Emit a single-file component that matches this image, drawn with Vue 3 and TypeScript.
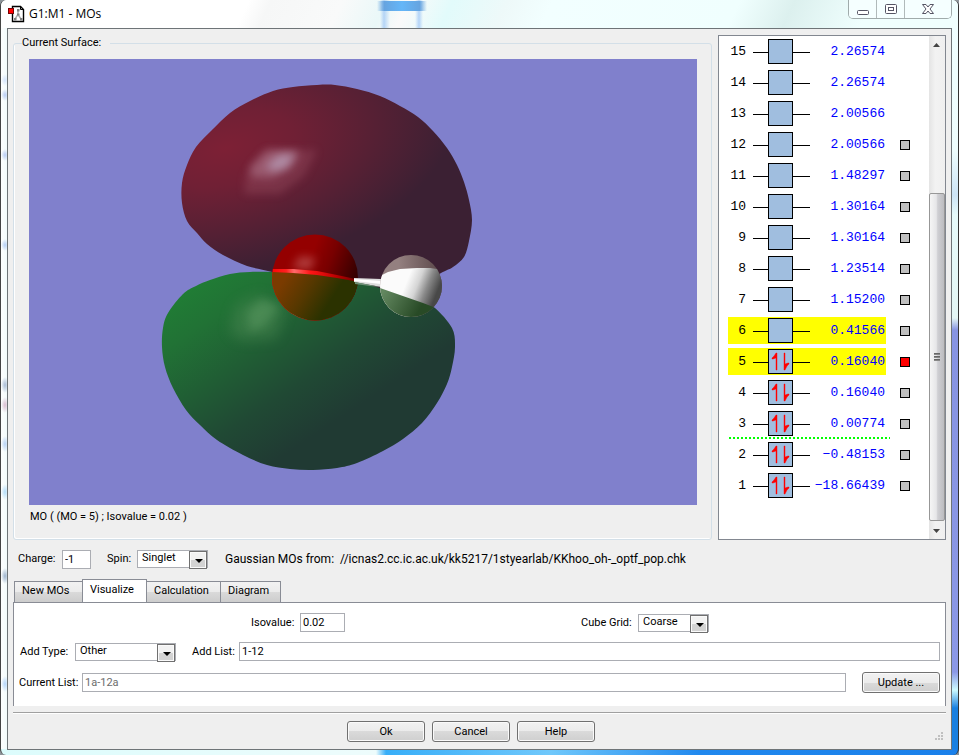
<script setup lang="ts">
import { ref } from 'vue'

interface Orbital {
  id: number
  energy: string
  occupied: boolean
  frontier: boolean
  cube: 'none' | 'available' | 'shown'
}

type Point = [number, number]

const orbitals = ref<Orbital[]>([
  { id: 15, energy: '2.26574', occupied: false, frontier: false, cube: 'none' },
  { id: 14, energy: '2.26574', occupied: false, frontier: false, cube: 'none' },
  { id: 13, energy: '2.00566', occupied: false, frontier: false, cube: 'none' },
  { id: 12, energy: '2.00566', occupied: false, frontier: false, cube: 'available' },
  { id: 11, energy: '1.48297', occupied: false, frontier: false, cube: 'available' },
  { id: 10, energy: '1.30164', occupied: false, frontier: false, cube: 'available' },
  { id: 9, energy: '1.30164', occupied: false, frontier: false, cube: 'available' },
  { id: 8, energy: '1.23514', occupied: false, frontier: false, cube: 'available' },
  { id: 7, energy: '1.15200', occupied: false, frontier: false, cube: 'available' },
  { id: 6, energy: '0.41566', occupied: false, frontier: true, cube: 'available' },
  { id: 5, energy: '0.16040', occupied: true, frontier: true, cube: 'shown' },
  { id: 4, energy: '0.16040', occupied: true, frontier: false, cube: 'available' },
  { id: 3, energy: '0.00774', occupied: true, frontier: false, cube: 'available' },
  { id: 2, energy: '−0.48153', occupied: true, frontier: false, cube: 'available' },
  { id: 1, energy: '−18.66439', occupied: true, frontier: false, cube: 'available' },
])

// Closed Catmull-Rom curve through the contour points of a lobe.
function contour(points: Point[]): string {
  const n = points.length
  const at = (i: number): Point => points[(i + n) % n]
  let d = `M${points[0][0]} ${points[0][1]}`
  for (let i = 0; i < n; i++) {
    const [p0, p1, p2, p3] = [at(i - 1), at(i), at(i + 1), at(i + 2)]
    d += `C${p1[0] + (p2[0] - p0[0]) / 6} ${p1[1] + (p2[1] - p0[1]) / 6}`
    d += ` ${p2[0] - (p3[0] - p1[0]) / 6} ${p2[1] - (p3[1] - p1[1]) / 6} ${p2[0]} ${p2[1]}`
  }
  return d + 'Z'
}

const redLobe = contour([
  [182, 203], [182, 183], [187, 165], [196, 147], [212, 130], [230, 113], [250, 101], [273, 91],
  [293, 87], [317, 85], [335, 85], [357, 89], [380, 96], [400, 106], [418, 117], [433, 131],
  [447, 148], [457, 165], [464, 182], [469, 200], [472, 220], [469, 241], [464, 257], [453, 267],
  [441, 273], [420, 285], [365, 288], [310, 285], [272, 272], [247, 266], [223, 255], [207, 244],
  [197, 233], [187, 221],
])

const greenLobe = contour([
  [162, 347], [163, 328], [168, 313], [183, 294], [196, 286], [210, 280], [230, 274], [250, 272],
  [273, 272], [293, 273], [317, 275], [337, 278], [357, 282], [380, 288], [400, 295], [423, 303],
  [435, 308], [452, 328], [455, 347], [452, 367], [447, 384], [437, 403], [422, 423], [403, 439],
  [383, 451], [357, 463], [337, 468], [313, 470], [290, 469], [267, 465], [243, 455], [217, 440],
  [200, 425], [186, 410], [173, 388], [165, 367],
])

const tabs = ['New MOs', 'Visualize', 'Calculation', 'Diagram']
const activeTab = ref('Visualize')
const charge = ref('-1')
const spin = ref('Singlet')
const isovalue = ref('0.02')
const cubeGrid = ref('Coarse')
const addType = ref('Other')
const addList = ref('1-12')
const currentList = ref('1a-12a')
</script>

<template>
  <div class="window">
    <header class="titlebar">
      <svg class="app-icon" width="17" height="18" viewBox="0 0 17 18" aria-hidden="true">
        <path d="M4.500 1.500H12.500L15.500 4.500V16.500H4.500Z" fill="#fff" stroke="#000" stroke-width="1.400" />
        <path d="M12.500 1.500V4.500H15.500" fill="none" stroke="#000" />
        <path d="M10 5V9.500L7 14M10 9.500L13 14" fill="none" stroke="#aaa" stroke-width="1.400" />
        <path d="M9 4h2.500v2.500h-2.500zM6 13h2.500v2.500h-2.500zM12 13h2.500v2.500h-2.500zM9 8.500h2.500v2h-2.500z" fill="#808080" />
        <rect x="0.500" y="3.500" width="5" height="5" fill="#f00" stroke="#700" />
      </svg>
      <h1>G1:M1 - MOs</h1>
      <div class="caption-buttons">
        <button type="button" aria-label="Minimize">
          <svg width="14" height="12" viewBox="0 0 14 12"><rect x="1.500" y="7.500" width="11" height="4" rx="1" fill="#fff" stroke="#555564" /></svg>
        </button>
        <button type="button" aria-label="Restore">
          <svg width="14" height="12" viewBox="0 0 14 12"><rect x="1.500" y="1.500" width="11" height="9" rx="1" fill="#fff" stroke="#555564" /><rect x="4.500" y="4.500" width="5" height="3" fill="#fff" stroke="#555564" /></svg>
        </button>
        <button type="button" class="close" aria-label="Close">
          <svg width="14" height="12" viewBox="0 0 14 12"><path d="M1.500 1.500H5L7 4L9 1.500H12.500L9 6L12.500 10.500H9L7 8L5 10.500H1.500L5 6Z" fill="#fff" stroke="#555564" /></svg>
        </button>
      </div>
    </header>

    <main class="client">
      <section class="upper">
        <fieldset class="surface">
          <legend>Current Surface:</legend>
          <svg class="scene" viewBox="29 59 668 446" preserveAspectRatio="xMidYMid meet" role="img" aria-label="Molecular orbital surface">
            <defs>
              <radialGradient id="redShade" gradientUnits="userSpaceOnUse" cx="0" cy="0" r="1" gradientTransform="translate(225 148) rotate(-12) scale(235 125)">
                <stop offset="0" stop-color="#7d2035" />
                <stop offset="0.3" stop-color="#702035" />
                <stop offset="0.65" stop-color="#562034" />
                <stop offset="1" stop-color="#3b2033" />
              </radialGradient>
              <linearGradient id="greenShade" gradientUnits="userSpaceOnUse" x1="185" y1="275" x2="298" y2="446">
                <stop offset="0" stop-color="#208035" />
                <stop offset="0.25" stop-color="#217235" />
                <stop offset="0.5" stop-color="#205e34" />
                <stop offset="0.75" stop-color="#204934" />
                <stop offset="1" stop-color="#203a33" />
              </linearGradient>
              <linearGradient id="oxygenTop" gradientUnits="userSpaceOnUse" x1="310" y1="258" x2="356" y2="276">
                <stop offset="0" stop-color="#940000" />
                <stop offset="0.4" stop-color="#780000" />
                <stop offset="1" stop-color="#350000" />
              </linearGradient>
              <linearGradient id="oxygenLow" gradientUnits="userSpaceOnUse" x1="285" y1="278" x2="328" y2="305">
                <stop offset="0" stop-color="#7a3b00" />
                <stop offset="0.5" stop-color="#563800" />
                <stop offset="1" stop-color="#2b3200" />
              </linearGradient>
              <linearGradient id="oxygenBand" x1="0" x2="1">
                <stop offset="0" stop-color="#f00" />
                <stop offset="0.18" stop-color="#ff2020" />
                <stop offset="0.27" stop-color="#ff6a6a" />
                <stop offset="0.45" stop-color="#ff1515" />
                <stop offset="0.75" stop-color="#b80000" />
                <stop offset="1" stop-color="#600" />
              </linearGradient>
              <linearGradient id="hydrogenTop" x1="0" x2="1">
                <stop offset="0.3" stop-color="#948080" />
                <stop offset="1" stop-color="#584547" />
              </linearGradient>
              <linearGradient id="hydrogenMid" gradientUnits="userSpaceOnUse" x1="408" y1="278" x2="438" y2="290">
                <stop offset="0" stop-color="#fbfbfb" />
                <stop offset="0.35" stop-color="#d4d4d4" />
                <stop offset="0.65" stop-color="#8a8a8a" />
                <stop offset="1" stop-color="#484848" />
              </linearGradient>
              <linearGradient id="hydrogenLow" gradientUnits="userSpaceOnUse" x1="385" y1="289" x2="420" y2="309">
                <stop offset="0" stop-color="#62875f" />
                <stop offset="1" stop-color="#284a26" />
              </linearGradient>
              <clipPath id="oxygenClip"><circle cx="315" cy="277.500" r="43" /></clipPath>
              <clipPath id="hydrogenClip"><circle cx="411" cy="286" r="31" /></clipPath>
              <filter id="soft" x="-50%" y="-50%" width="200%" height="200%"><feGaussianBlur stdDeviation="4" /></filter>
              <filter id="wide" x="-50%" y="-50%" width="200%" height="200%"><feGaussianBlur stdDeviation="7" /></filter>
            </defs>
            <rect x="29" y="59" width="668" height="446" fill="#8080cc" />
            <path :d="redLobe" fill="url(#redShade)" />
            <path d="M246 174L264 150L317 150L304 176L280 194L244 194Z" fill="#975064" opacity="0.400" filter="url(#soft)" />
            <path d="M250 167L268 150L300 151L291 167L272 178L252 177Z" fill="#b27f94" opacity="0.500" filter="url(#soft)" />
            <path d="M265 167L279 155L295 154L287 167L275 171Z" fill="#b9a2bd" opacity="0.700" filter="url(#soft)" />
            <path :d="greenLobe" fill="url(#greenShade)" />
            <path d="M236 306L258 295L286 306L276 338L243 340L230 332Z" fill="#58925c" opacity="0.400" filter="url(#wide)" />
            <path d="M248 312L262 299L278 307L264 326L250 331Z" fill="#5c9a62" opacity="0.500" filter="url(#soft)" />
            <g clip-path="url(#oxygenClip)">
              <rect x="270" y="233" width="90" height="90" fill="url(#oxygenTop)" />
              <path d="M292 268L300 256L316 258L310 270Z" fill="#c87474" opacity="0.500" filter="url(#soft)" />
              <path d="M270 269L293 269L317 271L337 275L360 280V323H270Z" fill="url(#oxygenBand)" />
              <path d="M270 272L293 273L317 275L337 278L360 282V323H270Z" fill="url(#oxygenLow)" />
            </g>
            <path d="M354 278L381 279V287L354 282Z" fill="#ddd" />
            <path d="M354 279L381 281V284L354 281Z" fill="#fff" />
            <path d="M355 282L381 287L370 286L355 284Z" fill="#6f9077" />
            <g clip-path="url(#hydrogenClip)">
              <rect x="380" y="255" width="62" height="62" fill="url(#hydrogenTop)" />
              <path d="M380 276L388 272L400 269L417 268L430 268L443 270V318H380Z" fill="url(#hydrogenMid)" />
              <path d="M380 288L400 295L423 303L436 308V318H380Z" fill="url(#hydrogenLow)" />
            </g>
          </svg>
          <p class="surface-caption">MO ( (MO = 5) ; Isovalue = 0.02 )</p>
        </fieldset>

        <div class="orbital-list">
          <table aria-label="Orbital energies">
            <tbody>
              <tr v-for="mo in orbitals" :key="mo.id" :class="{ frontier: mo.frontier, core: mo.id === 3 }">
                <th scope="row">{{ mo.id }}</th>
                <td class="level">
                  <svg width="57" height="25" viewBox="0 0 57 25">
                    <path d="M0 13.500H15M40 13.500H57" stroke="#000" />
                    <rect x="15.500" y="0.500" width="24" height="24" fill="#a0bedf" stroke="#000" />
                    <path v-if="mo.occupied" d="M23 4H24V21H23V9L20 10H19V9L21 7ZM31 4H32V15L35 14H36V15L34 17L32 21H31Z" fill="#f00" stroke="#f00" stroke-width="0.400" />
                  </svg>
                </td>
                <td class="energy">{{ mo.energy }}</td>
                <td class="cube">
                  <input v-if="mo.cube !== 'none'" type="checkbox" :checked="mo.cube === 'shown'" :aria-label="`Orbital ${mo.id}`" />
                </td>
              </tr>
            </tbody>
          </table>
          <div class="scrollbar" aria-hidden="true">
            <svg class="arrow" width="15" height="16" viewBox="0 0 15 16"><path d="M4 11L7.500 7L11 11Z" fill="#444" /></svg>
            <div class="track"><div class="thumb"><i></i><i></i><i></i></div></div>
            <svg class="arrow" width="15" height="18" viewBox="0 0 15 18"><path d="M4 8L7.500 12L11 8Z" fill="#444" /></svg>
          </div>
        </div>
      </section>

      <section class="molecule">
        <label for="charge">Charge:</label>
        <input id="charge" v-model="charge" class="text charge" type="text" />
        <label for="spin" class="spin-label">Spin:</label>
        <span class="combo spin">
          <select id="spin" v-model="spin"><option>Singlet</option></select>
        </span>
        <p class="source">Gaussian MOs from:&nbsp; //icnas2.cc.ic.ac.uk/kk5217/1styearlab/KKhoo_oh-_optf_pop.chk</p>
      </section>

      <div class="tabs" role="tablist">
        <button v-for="tab in tabs" :key="tab" type="button" role="tab" :aria-selected="tab === activeTab" :class="{ active: tab === activeTab }" @click="activeTab = tab">{{ tab }}</button>
      </div>

      <section class="panel" role="tabpanel">
        <div class="row settings">
          <div class="pair">
            <label for="isovalue">Isovalue:</label>
            <input id="isovalue" v-model="isovalue" class="text isovalue" type="text" />
          </div>
          <div class="pair">
            <label for="grid">Cube Grid:</label>
            <span class="combo grid">
              <select id="grid" v-model="cubeGrid"><option>Coarse</option></select>
            </span>
          </div>
        </div>
        <div class="row">
          <label for="type" class="type-label">Add Type:</label>
          <span class="combo type">
            <select id="type" v-model="addType"><option>Other</option></select>
          </span>
          <label for="list" class="list-label">Add List:</label>
          <input id="list" v-model="addList" class="text fill" type="text" />
        </div>
        <div class="row">
          <label for="current" class="current-label">Current List:</label>
          <input id="current" v-model="currentList" class="text fill" type="text" readonly disabled />
          <button type="button" class="push update">Update ...</button>
        </div>
      </section>

      <footer class="actions">
        <button type="button" class="push">Ok</button>
        <button type="button" class="push">Cancel</button>
        <button type="button" class="push">Help</button>
        <svg class="grip" width="9" height="9" viewBox="0 0 9 9" aria-hidden="true">
          <path d="M6 0h2v2H6zM3 3h2v2H3zM6 3h2v2H6zM0 6h2v2H0zM3 6h2v2H3zM6 6h2v2H6z" fill="#c0c0c0" />
        </svg>
      </footer>
    </main>
  </div>
</template>

<style>
body {
  margin: 0;
  background: #8d9499;
}
</style>

<style scoped>
* {
  box-sizing: border-box;
}

.window {
  display: flex;
  flex-direction: column;
  min-height: 100vh;
  padding: 0 6px 5px 7px;
  border-left: 1px solid #444;
  border-right: 1px solid #333;
  border-radius: 6px;
  font: 11px/16px Roboto, "Liberation Sans", sans-serif;
  color: #000;
  background:
    radial-gradient(ellipse 4px 6px at 4px 80px, #d5e5fc, transparent),
    radial-gradient(ellipse 4px 6px at 4px 95px, #b8ccf5, transparent),
    radial-gradient(ellipse 4px 6px at 4px 155px, #b8ccf5, transparent),
    radial-gradient(ellipse 4px 6px at 4px 245px, #b5cff6, transparent),
    radial-gradient(ellipse 4px 8px at 4px 385px, #a9bcd6, transparent),
    radial-gradient(ellipse 4px 8px at 4px 405px, #d9bdd0, transparent),
    radial-gradient(ellipse 4px 8px at 4px 444px, #b8d3f6, transparent),
    radial-gradient(ellipse 4px 8px at 4px 492px, #b5defa, transparent),
    radial-gradient(ellipse 4px 8px at 4px 576px, #9db3cd, transparent),
    radial-gradient(ellipse 4px 8px at 4px 684px, #b5d5fa, transparent),
    linear-gradient(90deg, #dcfcfc 0, #eefcfc 375px, #38aef8 385px, #70c8fb 550px, #2088ee 700px, #1a80ea 100%) left bottom / 100% 6px no-repeat,
    linear-gradient(#f0ffff 0, #eefdfd 150px, #cde4f6 195px, #e6fafa 215px, #e4f6f4 318px, #8794e2 330px, #8b98e6 672px, #ccfaff 690px, #1a80e0 708px) right top / 8px 100% no-repeat,
    linear-gradient(90deg, #fdfefe, #effafa 8px);
}

.titlebar {
  display: flex;
  align-items: flex-start;
  height: 28px;
  margin: 0 -6px 0 -7px;
  padding: 0 6px 0 7px;
  border-radius: 6px 6px 0 0;
  background:
    linear-gradient(90deg, transparent, #66a4e0 15%, #64b6f8 50%, #66a4e0 85%, transparent) 376px 1px / 50px 10px no-repeat,
    linear-gradient(90deg, transparent 379px, #b4d4f6 383px, transparent 389px, transparent 414px, #b4d4f8 418px, transparent 422px),
    linear-gradient(115deg, #fff 0, #fff 225px, #f6f7f7 245px, #f9fafa 310px, #eaf8f8 350px, #fafafa 370px, #e2fbfb 410px, #eef9f9 460px, #f2ffff 500px, #f0fffe 670px, #dcf0ee 720px, #f0fffe 790px, #f0fffe 100%);
}

.app-icon {
  margin-top: 5px;
}

h1 {
  flex: 1;
  margin: 5px 0 0 4px;
  font: 12px/17px "Open Sans", "Noto Sans", sans-serif;
}

.caption-buttons {
  display: flex;
  height: 19px;
  border: 1px solid #a0abab;
  border-top: 0;
  border-radius: 0 0 5px 5px;
  overflow: hidden;
}

.caption-buttons button {
  width: 28px;
  padding: 2px 0 0;
  border: 0;
  border-right: 1px solid #b0baba;
  background: #f5ffff;
}

.caption-buttons .close {
  width: 46px;
  border-right: 0;
}

.client {
  display: flex;
  flex: 1;
  flex-direction: column;
  margin: 0 0 0 -1px;
  padding: 6px 5px 0;
  border: 1px solid #6e7477;
  background: #efefef;
}

.upper {
  display: flex;
  flex: 1;
  gap: 6px;
}

.surface {
  display: flex;
  flex: 1;
  flex-direction: column;
  min-width: 0;
  margin: 0;
  padding: 8px 14px 9px 15px;
  border: 1px solid #d3dfe8;
  border-radius: 3px;
  box-shadow: inset 1px -1px #fff;
}

.surface legend {
  height: 16px;
  margin-left: -7px;
  padding: 0 9px 0 0;
}

.scene {
  display: block;
  width: 100%;
  background: #8080cc;
}

.surface-caption {
  margin: 4px 0 0 1px;
}

.orbital-list {
  display: flex;
  justify-content: space-between;
  width: 228px;
  border: 1px solid #828790;
  background: #fff;
}

table {
  align-self: flex-start;
  width: 200px;
  margin-left: 9px;
  border-spacing: 0;
  table-layout: fixed;
  font: 13px/16px "Liberation Mono", monospace;
}

tr {
  position: relative;
}

th,
td {
  height: 31px;
  padding: 0;
  border: solid #fff;
  border-width: 2px 0;
  font-weight: 400;
  text-align: right;
  vertical-align: middle;
}

th {
  width: 25px;
  padding-right: 7px;
}

.level {
  width: 57px;
}

.level svg {
  display: block;
}

.energy {
  width: 76px;
  padding-right: 1px;
  color: #00f;
}

.frontier > :not(.cube) {
  background: #ff0;
  background-clip: padding-box;
}

.core::after {
  content: "";
  position: absolute;
  left: 1px;
  bottom: 0;
  width: 161px;
  height: 2px;
  background: repeating-linear-gradient(90deg, #0f0 0 2px, transparent 2px 4px);
}

.cube {
  padding-left: 14px;
  text-align: left;
}

.cube input {
  display: block;
  width: 10px;
  height: 10px;
  margin: 1px 0 0;
  border: 1px solid #000;
  appearance: none;
  background: #c0c0c0;
}

.cube input:checked {
  background: #f00;
}

.scrollbar {
  display: flex;
  flex-direction: column;
  width: 16px;
  background: linear-gradient(90deg, #e4e4e4, #f2f2f2 40%, #efefef);
}

.arrow {
  display: block;
}

.track {
  display: flex;
  flex: 1;
  flex-direction: column;
  justify-content: flex-end;
}

.thumb {
  display: flex;
  flex-direction: column;
  align-items: center;
  justify-content: center;
  gap: 1px;
  height: 70%;
  border: 1px solid #979797;
  border-radius: 2px;
  background: linear-gradient(90deg, #f5f5f5, #e6e6e8 45%, #cfcfd3 55%, #bcbcc0);
}

.thumb i {
  width: 6px;
  height: 2px;
  background: linear-gradient(#555, #999);
}

.molecule {
  display: flex;
  align-items: center;
  height: 38px;
  padding-left: 5px;
}

.molecule > label {
  width: 44px;
}

.molecule > .spin-label {
  width: 30px;
  margin-left: 16px;
}

.source {
  margin: 0 0 0 17px;
  font-size: 12px;
  white-space: nowrap;
}

.text {
  height: 19px;
  padding: 0 2px;
  border: 1px solid #abadb3;
  background: #fff;
  font: inherit;
  color: #000;
}

.text:disabled {
  color: #6d6d6d;
}

.charge {
  width: 29px;
}

.combo {
  position: relative;
  display: block;
  height: 18px;
}

.combo select {
  display: block;
  width: 100%;
  height: 100%;
  padding: 0 20px 2px 4px;
  border: 1px solid #abadb3;
  border-radius: 0;
  appearance: none;
  background: #fff;
  font: inherit;
  line-height: 14px;
  color: #000;
}

.combo::before {
  content: "";
  position: absolute;
  top: 1px;
  right: 1px;
  width: 16px;
  height: 16px;
  border: 1px solid #707070;
  box-shadow: inset 0 0 0 1px #fafafa;
  background: linear-gradient(#f2f2f2 50%, #d3d3d3 50%);
  pointer-events: none;
}

.combo::after {
  content: "";
  position: absolute;
  top: 9px;
  right: 5px;
  border: solid transparent;
  border-width: 4px 4px 0;
  border-top-color: #000;
  pointer-events: none;
}

.spin,
.grid {
  width: 71px;
}

.type {
  width: 101px;
}

.tabs {
  display: flex;
  align-items: flex-end;
  height: 25px;
  margin-bottom: -1px;
  padding-left: 1px;
}

.tabs button {
  width: 68px;
  height: 22px;
  padding: 0 0 2px 7px;
  border: 1px solid #898c95;
  border-right: 0;
  background: linear-gradient(#f2f2f2, #ebebeb 50%, #dadada 50%, #cdcdcd);
  font: inherit;
  text-align: left;
  color: #000;
}

.tabs button.active {
  width: 65px;
  height: 24px;
  padding-bottom: 3px;
  border-right: 1px solid #898c95;
  border-bottom-color: #fff;
  background: #fff;
}

.tabs button:nth-child(3) {
  width: 73px;
  border-left: 0;
}

.tabs button:last-child {
  width: 61px;
  border-right: 1px solid #898c95;
}

.panel {
  display: flex;
  flex-direction: column;
  height: 104px;
  padding: 10px 5px 0;
  border: solid #898c95;
  border-width: 1px 1px 0;
  background: #fff;
}

.row {
  display: flex;
  align-items: center;
  height: 31px;
}

.row.settings {
  height: 19px;
  margin-bottom: 4px;
  padding: 0 231px 0 232px;
  justify-content: space-between;
}

.row label {
  white-space: nowrap;
}

.pair {
  display: flex;
  align-items: center;
}

.pair label {
  width: 49px;
}

.pair + .pair label {
  width: 57px;
}

.isovalue {
  width: 45px;
}

.type-label {
  width: 56px;
  padding-left: 1px;
}

.list-label {
  width: 47px;
  margin-left: 16px;
}

.current-label {
  width: 63px;
}

.fill {
  flex: 1;
  min-width: 0;
}

.push {
  width: 78px;
  height: 21px;
  padding: 0;
  border: 1px solid #707070;
  border-radius: 3px;
  box-shadow: inset 0 0 0 1px #fafafa;
  background: linear-gradient(#f2f2f2, #ebebeb 50%, #dadada 50%, #cfcfcf);
  font: inherit;
  color: #000;
}

.update {
  margin-left: 16px;
}

.actions {
  position: relative;
  display: flex;
  justify-content: center;
  gap: 7px;
  height: 37px;
  margin-top: 6px;
  padding: 8px 17px 0 0;
  border-top: 1px solid #a0a0a0;
  box-shadow: inset 0 1px #fff;
}

.grip {
  position: absolute;
  right: 2px;
  bottom: 8px;
}
</style>
